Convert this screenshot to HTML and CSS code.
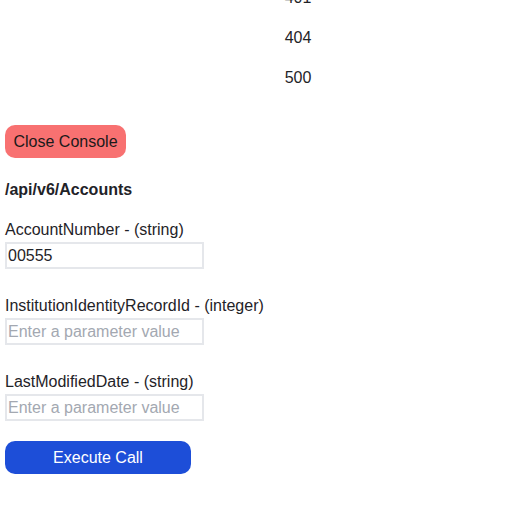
FILE: index.html
```html
<!DOCTYPE html>
<html>
<head>
<meta charset="utf-8">
<link rel="stylesheet" href="styles.css">
</head>
<body>
<div class="page">
  <div class="codes">
    <div class="code">401</div>
    <div class="code">404</div>
    <div class="code">500</div>
  </div>
  <button class="btn btn-close">Close Console</button>
  <h3 class="endpoint">/api/v6/Accounts</h3>
  <div class="field">
    <label class="label">AccountNumber - (string)</label>
    <input class="input" type="text" value="00555">
  </div>
  <div class="field">
    <label class="label">InstitutionIdentityRecordId - (integer)</label>
    <input class="input" type="text" placeholder="Enter a parameter value">
  </div>
  <div class="field last">
    <label class="label">LastModifiedDate - (string)</label>
    <input class="input" type="text" placeholder="Enter a parameter value">
  </div>
  <button class="btn btn-exec">Execute Call</button>
</div>
</body>
</html>
```

FILE: styles.css
```css
* { box-sizing: border-box; }
html, body { margin: 0; padding: 0; background: #fff; }
body {
  font-family: "Liberation Sans", Arial, sans-serif;
  font-size: 16px;
  color: #1f2328;
  overflow: hidden;
}
.page {
  padding: 0 5px;
  margin-top: -22px;
}
.codes {
  display: flex;
  flex-direction: column;
  padding-left: 275px;
  width: 320px;
}
.code {
  height: 40px;
  line-height: 40px;
  text-align: center;
  width: 36px;
}
.btn {
  display: block;
  border: none;
  font-family: inherit;
  font-size: 16px;
  height: 33px;
  border-radius: 10px;
  padding: 0;
  cursor: pointer;
}
.btn-close {
  margin-top: 27px;
  width: 121px;
  background: #f87171;
  color: #1a1a1a;
}
.endpoint {
  margin: 20px 0 15px;
  font-size: 16px;
  line-height: 24px;
  font-weight: bold;
}
.field {
  display: flex;
  flex-direction: column;
  align-items: flex-start;
  margin-bottom: 24px;
}
.field.last { margin-bottom: 20px; }
.label {
  line-height: 24px;
  padding-top: 1px;
  height: 25px;
}
.input {
  width: 199px;
  height: 27px;
  border: 2px solid #e5e7eb;
  padding: 0 1px;
  font-family: inherit;
  font-size: 16px;
  color: #1f2328;
  outline: none;
}
.input::placeholder { color: #a3a8b1; }
.btn-exec {
  width: 186px;
  background: #1d4ed8;
  color: #fff;
}
```
